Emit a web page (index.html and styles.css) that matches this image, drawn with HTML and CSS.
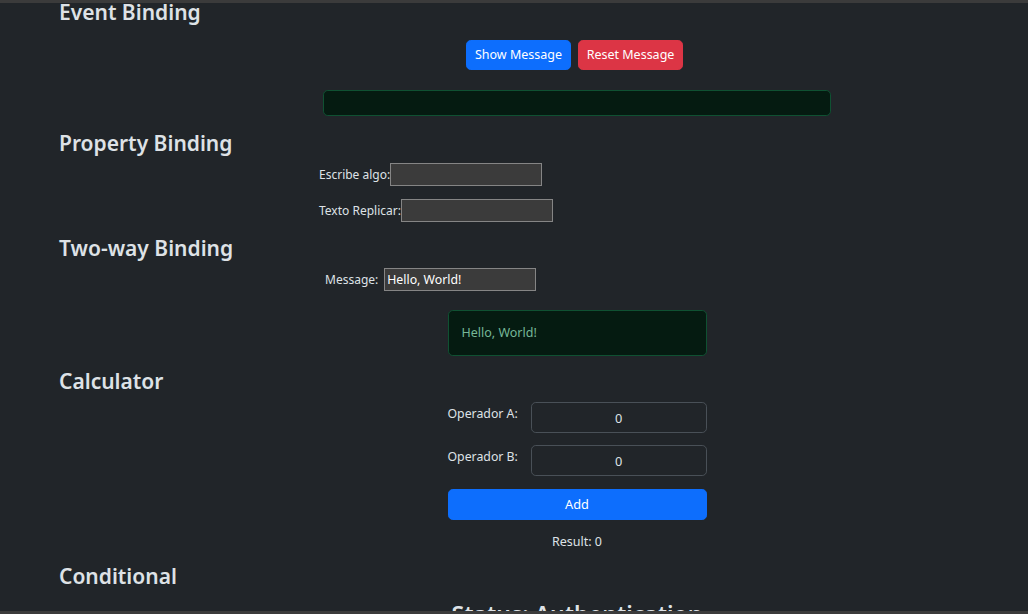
FILE: index.html
```html
<!DOCTYPE html>
<html lang="en">
<head>
<meta charset="utf-8">
<title>Angular Bindings</title>
<link rel="stylesheet" href="styles.css">
</head>
<body>
<div class="frame-top"></div>
<main class="page">
  <section class="sec sec-event">
    <h3 class="title">Event Binding</h3>
    <div class="center-box">
      <div class="btn-row">
        <button class="btn btn-primary">Show Message</button>
        <button class="btn btn-danger">Reset Message</button>
      </div>
      <div class="alert alert-empty"></div>
    </div>
  </section>

  <section class="sec sec-prop">
    <h3 class="title">Property Binding</h3>
    <div class="center-box">
      <div class="left-col">
        <div class="field-row">
          <label>Escribe algo:</label><input class="native-input" type="text">
        </div>
        <div class="field-row row-2">
          <label>Texto Replicar:</label><input class="native-input" type="text">
        </div>
      </div>
    </div>
  </section>

  <section class="sec sec-two">
    <h3 class="title">Two-way Binding</h3>
    <div class="center-box">
      <div class="left-col">
        <div class="field-row msg-row">
          <label>Message:</label><input class="native-input" type="text" value="Hello, World!">
        </div>
      </div>
      <div class="alert alert-msg">Hello, World!</div>
    </div>
  </section>

  <section class="sec sec-calc">
    <h3 class="title">Calculator</h3>
    <div class="center-box">
      <div class="calc">
        <div class="calc-row">
          <label class="calc-label">Operador A:</label>
          <input class="form-control" type="text" value="0">
        </div>
        <div class="calc-row row-b">
          <label class="calc-label">Operador B:</label>
          <input class="form-control" type="text" value="0">
        </div>
        <button class="btn btn-primary btn-block">Add</button>
        <p class="result">Result: 0</p>
      </div>
    </div>
  </section>

  <section class="sec sec-cond">
    <h3 class="title">Conditional</h3>
    <div class="center-box">
      <h2 class="status">Status: Authentication</h2>
    </div>
  </section>
</main>
<div class="frame-bottom"></div>
</body>
</html>
```

FILE: styles.css
```css
html, body {
  margin: 0;
  padding: 0;
}

body {
  background: #212529;
  color: #dee2e6;
  font-family: "Noto Sans", "Open Sans", sans-serif;
  font-size: 12.8px;
  line-height: 1.5;
  height: 614px;
  overflow: hidden;
}

.frame-top {
  height: 3px;
  background: #3b3b3b;
}

.frame-bottom {
  position: fixed;
  left: 0;
  right: 0;
  bottom: 0;
  height: 3px;
  background: #3b3b3b;
}

.page {
  margin-top: -4px;
}

.title {
  margin: 0;
  padding-left: 59px;
  font-size: 21px;
  line-height: 27px;
  font-weight: 600;
  color: #dee2e6;
}

.center-box {
  padding-left: 126px;
  display: flex;
  flex-direction: column;
  align-items: center;
}

/* Event binding */
.btn-row {
  display: flex;
  gap: 2px;
  margin-top: 14px;
}

.btn {
  font-family: inherit;
  font-size: 12.8px;
  line-height: 19.2px;
  padding: 4.8px 9.6px;
  border: 1px solid transparent;
  border-radius: 4.8px;
  color: #fff;
  cursor: pointer;
}

.btn-row .btn {
  width: 105px;
  height: 30px;
  padding: 0;
  margin-right: 5px;
  font-size: 12.5px;
}

.btn-primary {
  background: #0d6efd;
  border-color: #0d6efd;
}

.btn-danger {
  background: #dc3545;
  border-color: #dc3545;
}

.alert {
  box-sizing: border-box;
  background: #051b11;
  border: 1px solid #0f5132;
  border-radius: 4.8px;
  color: #75b798;
}

.alert-empty {
  width: 508px;
  height: 26px;
  margin-top: 20px;
}

/* Property binding */
.sec-prop {
  margin-top: 14px;
}

.left-col {
  width: 516px;
  display: flex;
  flex-direction: column;
}

.field-row {
  display: flex;
  align-items: center;
  height: 23px;
  font-size: 12px;
  margin-top: 6px;
}

.field-row.row-2 {
  margin-top: 13px;
}

.native-input {
  box-sizing: border-box;
  width: 152px;
  height: 23px;
  margin: 0;
  padding: 1px 2px;
  background: #3b3b3b;
  border: 1px solid #858585;
  color: #fff;
  font-family: inherit;
  font-size: 12.3px;
  outline: none;
}

/* Two-way */
.sec-two {
  margin-top: 13px;
}

.msg-row {
  margin-left: 6px;
}

.msg-row label {
  margin-right: 6px;
}

.alert-msg {
  width: 259px;
  height: 46px;
  margin-top: 19px;
  padding: 0 13px;
  display: flex;
  align-items: center;
  font-size: 12.5px;
}

/* Calculator */
.sec-calc {
  margin-top: 12px;
}

.calc {
  width: 259px;
  display: flex;
  flex-direction: column;
  margin-top: 7px;
}

.calc-row {
  display: flex;
  align-items: flex-start;
}

.calc-row.row-b {
  margin-top: 12px;
}

.calc-label {
  font-size: 12.3px;
  padding-top: 3px;
  margin-right: 13px;
  white-space: nowrap;
}

.form-control {
  flex: 1;
  min-width: 0;
  box-sizing: border-box;
  height: 31px;
  padding: 4.8px 9.6px;
  background: #212529;
  border: 1px solid #495057;
  border-radius: 4.8px;
  color: #dee2e6;
  font-family: inherit;
  font-size: 12.8px;
  text-align: center;
  outline: none;
}

.btn-block {
  width: 100%;
  height: 31px;
  margin-top: 13px;
  padding: 0;
}

.result {
  margin: 13px 0 0;
  text-align: center;
  font-size: 12.5px;
}

/* Conditional */
.sec-cond {
  margin-top: 11px;
}

.status {
  margin: 9px 0 0;
  font-size: 23px;
  line-height: 31px;
  font-weight: 600;
  color: #dee2e6;
}
```
